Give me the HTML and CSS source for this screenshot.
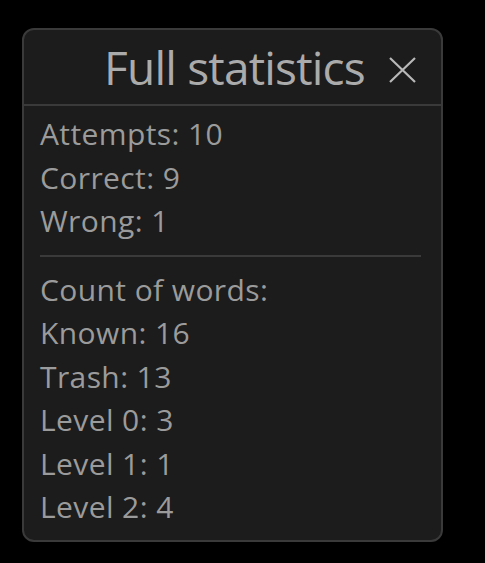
FILE: index.html
```html
<!DOCTYPE html>
<html>
<head>
<meta charset="utf-8">
<link rel="stylesheet" href="styles.css">
</head>
<body>
<div class="panel">
  <div class="header">
    <div class="title">Full statistics</div>
    <svg class="close" viewBox="0 0 27 26" width="27" height="26"><path d="M1 1 L26 25 M26 1 L1 25" stroke="#b8b8b8" stroke-width="2.2" fill="none"/></svg>
  </div>
  <div class="content">
    <div class="row">Attempts: 10</div>
    <div class="row">Correct: 9</div>
    <div class="row">Wrong: 1</div>
    <div class="divider"></div>
    <div class="row">Count of words:</div>
    <div class="row">Known: 16</div>
    <div class="row">Trash: 13</div>
    <div class="row">Level 0: 3</div>
    <div class="row">Level 1: 1</div>
    <div class="row">Level 2: 4</div>
  </div>
</div>
</body>
</html>
```
FILE: styles.css
```css
html, body {
  margin: 0;
  padding: 0;
  background: #000;
}
body {
  font-family: "Open Sans", "Noto Sans", sans-serif;
}
.panel {
  margin: 28px 0 0 22px;
  width: 421px;
  height: 514px;
  box-sizing: border-box;
  border: 2px solid #3a3a3a;
  border-radius: 12px;
  background: #1c1c1c;
}
.header {
  position: relative;
  height: 74px;
  border-bottom: 2px solid #3a3a3a;
  display: flex;
  align-items: center;
  justify-content: center;
}
.title {
  font-size: 46px;
  color: #ababab;
  letter-spacing: -0.8px;
  line-height: 1;
  margin-left: 4px;
}
.close {
  position: absolute;
  right: 25px;
  top: 27px;
}
.content {
  padding: 6px 20px 0 16px;
}
.row {
  font-size: 30px;
  line-height: 43.5px;
  color: #9b9b9b;
  letter-spacing: 0.4px;
}
.divider {
  height: 2px;
  background: #3a3a3a;
  margin: 12.5px 0 10.7px 0;
}
```
